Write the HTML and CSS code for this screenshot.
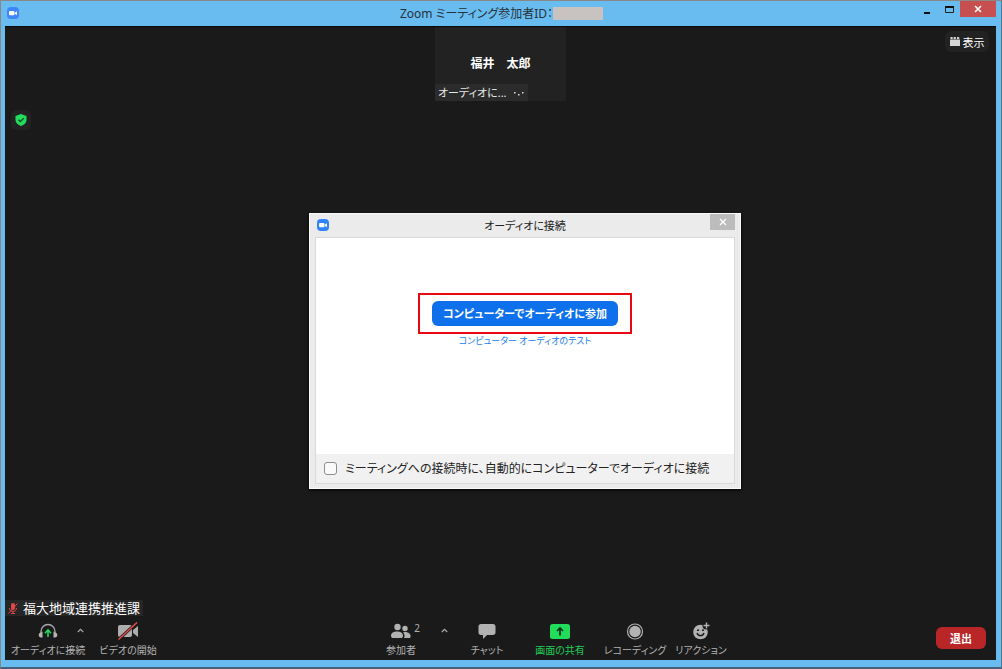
FILE: index.html
```html
<!DOCTYPE html>
<html lang="ja">
<head>
<meta charset="utf-8">
<title>Zoom ミーティング</title>
<link rel="stylesheet" href="styles.css">
</head>
<body>
<div class="window">
  <header class="titlebar">
    <svg class="app-icon" viewBox="0 0 12 12" aria-hidden="true"><rect width="12" height="12" rx="4" fill="#3f86fb"/><rect x="2" y="4" width="5.500" height="4.200" rx="1" fill="#fff"/><path d="M8 5.500 10 4.200v4L8 6.900z" fill="#fff"/></svg>
    <h1 class="title">Zoom ミーティング参加者ID：<span class="masked-id"></span></h1>
    <div class="window-buttons">
      <button class="win-btn" aria-label="最小化"><svg width="8" height="12" viewBox="0 0 8 12"><path d="M1 9h6v2H1z" fill="#111"/></svg></button>
      <button class="win-btn" aria-label="最大化"><svg width="9" height="12" viewBox="0 0 9 12"><path d="M.5 4.500v5h8v-5" fill="none" stroke="#222"/><path d="M0 3h9v2H0z" fill="#111"/></svg></button>
      <button class="win-btn win-close" aria-label="閉じる"><svg width="8" height="8" viewBox="0 0 8 8"><path d="m1 1 6 6M7 1 1 7" stroke="#fff" stroke-width="1.600"/></svg></button>
    </div>
  </header>

  <main class="meeting">
    <section class="strip">
      <div class="tile">
        <strong class="tile-name">福井　太郎</strong>
        <div class="tile-status"><span>オーディオに...</span><svg width="12" height="8" viewBox="0 0 12 8" fill="#ddd"><path d="M1 3h1.500v1.500H1zM5 5h1.500v1.500H5zM9 3h1.500v1.500H9z"/></svg></div>
      </div>
      <button class="view-btn"><svg width="10" height="9" viewBox="0 0 10 9"><path d="M.5 0h2.200v2H.5zM3.700 0h2.200v2H3.700zM7 0h2.200v2H7zM0 2.500h10V9H0z" fill="#d6d6d6"/></svg>表示</button>
    </section>

    <button class="shield" aria-label="暗号化"><svg width="12" height="12" viewBox="0 0 12 12"><path d="M6 0 11.500 2v4c0 3-2.500 5-5.500 6C3 11 .5 9 .5 6V2z" fill="#22dd5c"/><path d="m3.500 5.800 1.800 1.800 3.400-3.300" fill="none" stroke="#154925" stroke-width="1.300"/></svg></button>

    <div class="stage"></div>

    <div class="self-name"><svg width="10" height="11" viewBox="0 0 10 11"><rect x="3" y="0" width="4" height="7" rx="2" fill="#e04848"/><path d="M1.500 5c0 4.500 7 4.500 7 0M5 8v2.500M3 10.500h4M.5 10.500 9.500.5" fill="none" stroke="#e04848"/></svg>福大地域連携推進課</div>

    <nav class="toolbar">
      <div class="group">
        <div class="tool-wrap">
          <button class="tool tool-wide"><svg width="20" height="18" viewBox="0 0 20 18"><path d="M3 11V9.500a7 7 0 0 1 14 0V11" fill="none" stroke="#aaa" stroke-width="1.300"/><path d="M4.500 9.500v6H3c-3 0-3-5 0-5zM15.500 9.500v6H17c3 0 3-5 0-5z" fill="#b5b5b5"/><path d="M10 15V8.500M7 11.200 10 8l3 3.200" fill="none" stroke="#22dd5c" stroke-width="1.600"/></svg>オーディオに接続</button>
          <button class="caret caret-audio" aria-label="オーディオ設定"><svg width="7" height="5" viewBox="0 0 7 5"><path d="m.8 4 2.700-2.700L6.200 4" fill="none" stroke="#aaa" stroke-width="1.200"/></svg></button>
        </div>
        <button class="tool tool-wide"><svg width="22" height="18" viewBox="0 0 22 18"><rect x="1" y="3" width="14" height="12" rx="2" fill="#adadad"/><path d="m16 8 5-4v11l-5-4z" fill="#adadad"/><path d="M1.500 17.500 20 .5" stroke="#1a1a1a" stroke-width="3"/><path d="M1.500 17.500 20 .5" stroke="#e84a4a" stroke-width="1.500"/></svg>ビデオの開始</button>
      </div>

      <div class="group">
        <div class="tool-wrap">
          <button class="tool tool-narrow"><svg width="20" height="18" viewBox="0 0 20 18" fill="#b2b2b2"><circle cx="6.500" cy="5" r="3.200"/><circle cx="14" cy="6.500" r="2.700"/><path d="M0 13.500C0 8 12 8 12 13.500c0 2-1 2.500-2 2.500H2c-1 0-2-.5-2-2.500zM13 16h5c3 0 2-6-4-6-1 0-1.500.2-2 .5 1.500 1.500 2 3.500 1 5.500z"/></svg>参加者</button>
          <span class="count">2</span>
        </div>
        <button class="caret" aria-label="参加者メニュー"><svg width="7" height="5" viewBox="0 0 7 5"><path d="m.8 4 2.700-2.700L6.200 4" fill="none" stroke="#aaa" stroke-width="1.200"/></svg></button>
        <button class="tool tool-narrow"><svg width="18" height="18" viewBox="0 0 18 18"><path d="M3 2h12c1.500 0 2.500 1 2.500 2.500v6c0 1.500-1 2.500-2.500 2.500H9l-4 4v-4H3C1.500 13 .5 12 .5 10.500v-6C.5 3 1.500 2 3 2z" fill="#b2b2b2"/></svg>チャット</button>
        <button class="tool tool-share"><svg width="20" height="18" viewBox="0 0 20 18"><rect y="2" width="20" height="15" rx="2.500" fill="#22dd5c"/><path d="M10 13.500V6.500M7 9l3-3 3 3" fill="none" stroke="#14301c" stroke-width="1.700"/></svg>画面の共有</button>
        <button class="tool"><svg width="18" height="18" viewBox="0 0 18 18"><circle cx="9" cy="9.500" r="7.500" fill="none" stroke="#b2b2b2" stroke-width="1.200"/><circle cx="9" cy="9.500" r="5.700" fill="#b2b2b2"/></svg>レコーディング</button>
        <button class="tool"><svg width="18" height="18" viewBox="0 0 18 18"><circle cx="8.500" cy="10" r="7.300" fill="#b2b2b2"/><circle cx="14.500" cy="3.500" r="4" fill="#1a1a1a"/><path d="M14.500.5v6M11.500 3.500h6" stroke="#b2b2b2" stroke-width="1.400"/><path d="M5 7.500h2V9H5zM10 7.500h2V9h-2z" fill="#1a1a1a"/><path d="M5 11c1 3.500 6 3.500 7 0" fill="none" stroke="#1a1a1a" stroke-width="1.400"/></svg>リアクション</button>
      </div>

      <button class="leave">退出</button>
    </nav>

    <section class="dialog" role="dialog" aria-labelledby="dialog-title">
      <header class="dialog-bar">
        <svg class="dialog-icon" viewBox="0 0 12 12" aria-hidden="true"><rect width="12" height="12" rx="4" fill="#2f83fb"/><rect x="2" y="4" width="5.500" height="4.200" rx="1" fill="#fff"/><path d="M8 5.500 10 4.200v4L8 6.900z" fill="#fff"/></svg>
        <h2 class="dialog-title" id="dialog-title">オーディオに接続</h2>
        <button class="dialog-close" aria-label="閉じる"><svg width="8" height="8" viewBox="0 0 8 8"><path d="m1 1 6 6M7 1 1 7" stroke="#fff" stroke-width="1.300"/></svg></button>
      </header>
      <div class="dialog-body">
        <div class="highlight"><button class="join">コンピューターでオーディオに参加</button></div>
        <a class="test" href="#">コンピューター オーディオのテスト</a>
      </div>
      <label class="auto"><input class="check" type="checkbox">ミーティングへの接続時に、自動的にコンピューターでオーディオに接続</label>
    </section>
  </main>
</div>
</body>
</html>
```
FILE: styles.css
```css
* {
  box-sizing: border-box;
}

body {
  margin: 0;
  font-family: "Noto Sans", "Noto Sans CJK JP", sans-serif;
  font-feature-settings: "palt";
  font-size: 12px;
}

button {
  display: flex;
  align-items: center;
  justify-content: center;
  margin: 0;
  padding: 0;
  border: 0;
  background: none;
  color: inherit;
  font: inherit;
  font-feature-settings: inherit;
  white-space: nowrap;
}

svg {
  display: block;
  flex: none;
}

.window {
  display: flex;
  flex-direction: column;
  min-height: 100vh;
  padding: 0 5px 7px 4px;
  border: 1px solid #8a8784;
  border-right-color: #55788f;
  border-bottom: 2px solid #45637c;
  background: #69bcef;
}

.titlebar {
  display: grid;
  grid-template-columns: 1fr auto 1fr;
  height: 25px;
}

.app-icon {
  width: 12px;
  height: 12px;
  margin: 6px 2px;
}

.title {
  display: flex;
  align-items: center;
  margin: 0;
  padding-left: 2px;
  color: #26323a;
  font-size: 12px;
  font-weight: 400;
  line-height: 25px;
}

.masked-id {
  width: 50px;
  height: 13px;
  background: #c8c3c1;
}

.window-buttons {
  display: flex;
  justify-content: flex-end;
}

.win-btn {
  width: 22px;
  height: 16px;
}

.win-close {
  width: 36px;
  background: #c84f50;
}

.meeting {
  position: relative;
  display: flex;
  flex: 1;
  flex-direction: column;
  align-items: flex-start;
  border-top: 1px solid #090909;
  background: #1a1a1a;
  color: #fff;
}

.strip {
  position: relative;
  display: flex;
  justify-content: center;
  align-self: stretch;
}

.tile {
  display: flex;
  flex-direction: column;
  width: 131px;
  height: 74px;
  background: #222;
}

.tile-name {
  flex: 1;
  padding-top: 18px;
  font-size: 12px;
  line-height: 38px;
  text-align: center;
}

.tile-status {
  display: flex;
  align-items: center;
  align-self: flex-start;
  gap: 6px;
  height: 17px;
  padding: 0 3px;
  background: #2b2b2b;
  color: #e8e8e8;
  font-size: 11px;
  line-height: 16px;
}

.view-btn {
  position: absolute;
  top: 4px;
  right: 7px;
  gap: 3px;
  width: 44px;
  height: 21px;
  border-radius: 6px;
  background: #222;
  font-size: 11px;
}

.shield {
  width: 20px;
  height: 20px;
  margin: 9px 6px;
  border-radius: 5px;
  background: #222;
}

.stage {
  flex: 1;
}

.self-name {
  display: flex;
  align-items: center;
  gap: 5px;
  height: 16px;
  padding: 0 3px;
  background: #262626;
  font-size: 13px;
  line-height: 14px;
}

.toolbar {
  display: flex;
  justify-content: space-between;
  align-self: stretch;
  height: 44px;
  padding: 0 10px 0 3px;
  color: #b2b2b2;
  font-size: 10px;
}

.group {
  display: flex;
}

.tool-wrap {
  position: relative;
}

.tool {
  flex-direction: column;
  justify-content: flex-start;
  gap: 2px;
  width: 66px;
  padding-top: 6px;
  line-height: 16px;
}

.tool-wide {
  width: 80px;
}

.tool-narrow {
  width: 62px;
}

.tool-share {
  width: 84px;
  color: #22cc57;
}

.caret {
  align-self: flex-start;
  width: 24px;
  height: 28px;
}

.caret-audio {
  position: absolute;
  top: 0;
  right: -4px;
}

.count {
  position: absolute;
  top: 4px;
  right: 12px;
  line-height: 16px;
}

.leave {
  align-self: center;
  width: 50px;
  height: 22px;
  border-radius: 6px;
  background: #b92628;
  color: #fff;
  font-size: 11px;
  font-weight: 700;
}

.dialog {
  position: absolute;
  top: 186px;
  left: 304px;
  width: 432px;
  padding: 0 5px 4px;
  border: 1px solid #fafafa;
  background: #ebebeb;
  color: #222;
  box-shadow: 0 1px 3px #000;
}

.dialog-bar {
  display: grid;
  grid-template-columns: 1fr auto 1fr;
  height: 23px;
}

.dialog-icon {
  width: 12px;
  height: 12px;
  margin: 5px 2px;
}

.dialog-title {
  margin: 0;
  font-size: 11px;
  font-weight: 400;
  line-height: 24px;
}

.dialog-close {
  justify-self: end;
  width: 25px;
  height: 16px;
  background: #bcbcbc;
}

.dialog-body {
  display: flex;
  flex-direction: column;
  align-items: center;
  height: 217px;
  padding-top: 55px;
  border: 1px solid #dadada;
  border-bottom: 0;
  background: #fff;
}

.highlight {
  padding: 6px 12px;
  border: 2px solid #e80813;
}

.join {
  min-width: 186px;
  height: 25px;
  border-radius: 6px;
  background: #0e71eb;
  color: #fff;
  font-size: 11px;
  font-weight: 700;
  line-height: 20px;
}

.test {
  color: #1b7cee;
  font-size: 9px;
  line-height: 14px;
  text-decoration: none;
}

.auto {
  display: flex;
  align-items: center;
  gap: 8px;
  height: 30px;
  padding: 0 8px;
  border: 1px solid #dadada;
  border-top: 0;
  background: #f1f1f1;
  font-size: 12px;
  line-height: 16px;
  white-space: nowrap;
}

.check {
  flex: none;
  width: 13px;
  height: 13px;
  margin: 0;
  border: 1px solid #8d8d8d;
  border-radius: 3px;
  background: #fafafa;
  appearance: none;
}

.check:checked {
  background: #0e71eb;
}
```
